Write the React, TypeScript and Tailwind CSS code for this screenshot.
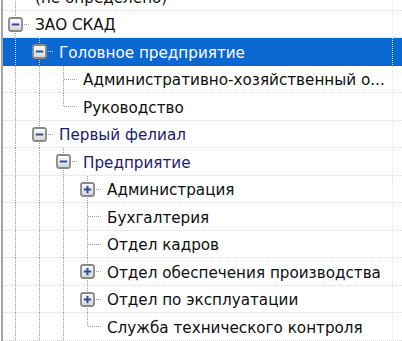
import React from "react";

type Node = {
  text: string;
  level: number;
  box?: "minus" | "plus";
  last?: boolean;
  color?: string;
  selected?: boolean;
};

const nodes: Node[] = [
  { text: "(не определено)", level: 0 },
  { text: "ЗАО СКАД", level: 0, box: "minus" },
  { text: "Головное предприятие", level: 1, box: "minus", selected: true },
  { text: "Административно-хозяйственный о...", level: 2 },
  { text: "Руководство", level: 2, last: true },
  { text: "Первый фелиал", level: 1, box: "minus", color: "text-[#1c1c6a]" },
  { text: "Предприятие", level: 2, box: "minus", color: "text-[#1c1c6a]" },
  { text: "Администрация", level: 3, box: "plus" },
  { text: "Бухгалтерия", level: 3 },
  { text: "Отдел кадров", level: 3 },
  { text: "Отдел обеспечения производства", level: 3, box: "plus" },
  { text: "Отдел по эксплуатации", level: 3, box: "plus" },
  { text: "Служба технического контроля", level: 3, last: true },
];

const H = 27;

function Guide({ sel }: { sel: boolean }) {
  const c = sel ? "#d6e6fa" : "#9c9c9c";
  return (
    <svg width={24} height={H} className="shrink-0 block">
      <line x1={12.5} y1={0} x2={12.5} y2={H} stroke={c} strokeWidth={1} strokeDasharray="1 1" />
    </svg>
  );
}

function Own({ node, sel }: { node: Node; sel: boolean }) {
  const c = sel ? "#d6e6fa" : "#9c9c9c";
  const mid = 13.5;
  return (
    <svg width={28} height={H} className="shrink-0 block">
      <defs>
        <linearGradient id="bx" x1="0" y1="0" x2="0" y2="1">
          <stop offset="0" stopColor="#ffffff" />
          <stop offset="1" stopColor="#d4d4d4" />
        </linearGradient>
      </defs>
      <line x1={12.5} y1={0} x2={12.5} y2={node.last ? mid : H} stroke={c} strokeWidth={1} strokeDasharray="1 1" />
      <line x1={13} y1={mid} x2={27} y2={mid} stroke={c} strokeWidth={1} strokeDasharray="1 1" />
      {node.box && (
        <g>
          <rect x={6} y={mid - 6.5} width={13} height={13} rx={2.2} fill="url(#bx)" stroke="#888888" strokeWidth={1.8} />
          <line x1={8.8} y1={mid} x2={16.2} y2={mid} stroke="#2d4c9e" strokeWidth={2} />
          {node.box === "plus" && (
            <line x1={12.5} y1={mid - 3.7} x2={12.5} y2={mid + 3.7} stroke="#2d4c9e" strokeWidth={2} />
          )}
        </g>
      )}
    </svg>
  );
}

export default function App() {
  return (
    <div className="w-[402px] h-[341px] overflow-hidden bg-white pl-[1px]">
      <div className="h-full border-l-2 border-[#a5a5a5] overflow-hidden">
        <div className="mt-[-17px]" style={{ fontFamily: '"DejaVu Sans", sans-serif' }}>
          {nodes.map((n, i) => {
            const sel = !!n.selected;
            return (
              <div
                key={i}
                className={`flex h-[27.5px] border-b border-dotted ${
                  sel ? "bg-[#0a68d2] border-[#0a68d2]" : "border-[#dadada]"
                }`}
              >
                <div
                  className={`flex w-[390px] shrink-0 border-r border-dotted ${sel ? "border-[#cfe0f7]" : "border-[#e0e0e0]"}`}
                >
                  {Array.from({ length: n.level }).map((_, k) => (
                    <Guide key={k} sel={sel} />
                  ))}
                  <Own node={n} sel={sel} />
                  <div
                    className={`flex-1 flex items-center pl-[4px] pt-[4px] text-[15.2px] whitespace-nowrap overflow-hidden ${
                      sel ? "text-white" : n.color ?? "text-[#0e0e0e]"
                    }`}
                  >
                    {n.text}
                  </div>
                </div>
                <div className="flex-1" />
              </div>
            );
          })}
        </div>
      </div>
    </div>
  );
}
